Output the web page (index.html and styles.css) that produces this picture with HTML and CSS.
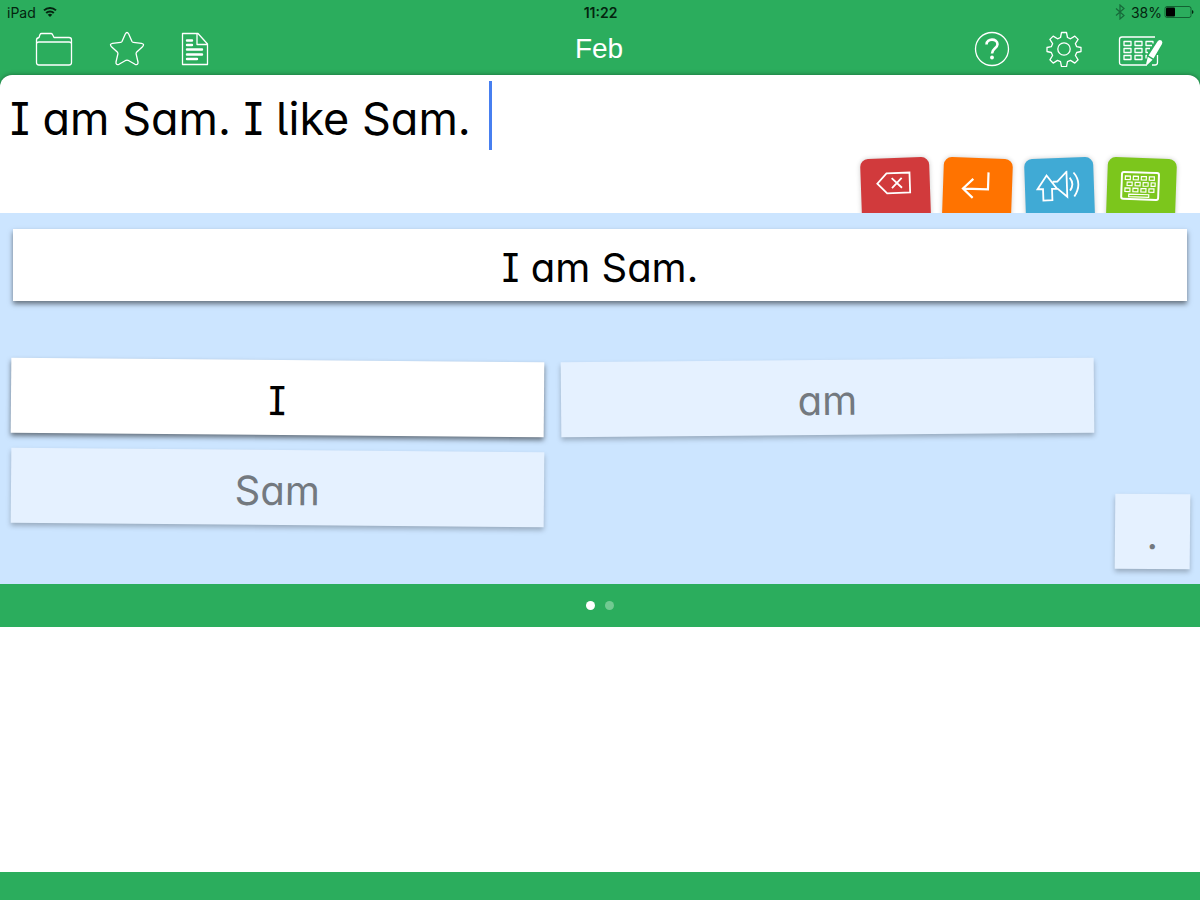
FILE: index.html
```html
<!DOCTYPE html>
<html lang="en">
<head>
    <meta charset="UTF-8">
    <meta name="viewport" content="width=device-width, initial-scale=1.0">
    <title>Feb</title>
    <link rel="stylesheet" href="styles.css">
</head>
<body>
    <header class="top">
        <div class="status-bar">
            <div class="status-left">
                <span>iPad</span>
                <svg width="14" height="12" viewBox="0 0 14 12" fill="none" stroke="#04240f" stroke-width="2">
                    <path d="M1 4.4a8.6 8.6 0 0 1 12 0M3.2 7a5.4 5.4 0 0 1 7.6 0"/>
                    <path d="M7 11L4.7 8.8a3.3 3.3 0 0 1 4.6 0z" fill="#04240f" stroke="none"/>
                </svg>
            </div>
            <time class="clock">11:22</time>
            <div class="status-right">
                <svg width="10" height="16" viewBox="0 0 10 16" fill="none" stroke="#17693a" stroke-width="1.2">
                    <path d="M1 4.5l8 7L5 15V1l4 3.5-8 7"/>
                </svg>
                <span>38%</span>
                <svg width="30" height="12" viewBox="0 0 30 12">
                    <rect x="1" y=".5" width="26" height="11" rx="2" fill="none" stroke="#126232"/>
                    <rect x="2" y="1.5" width="9" height="9" rx="1" fill="#000"/>
                    <path d="M28 4v4q1.5-.5 1.5-2t-1.5-2z" fill="#04240f"/>
                </svg>
            </div>
        </div>

        <nav class="toolbar">
            <div class="tools">
                <button class="tool" type="button" aria-label="Open">
                    <svg width="38" height="36" viewBox="0 0 38 36">
                        <path d="M1.5 9V31.5q0 2.500 2.500 2.500H34q2.500 0 2.500-2.500V9q0-2.500-2.500-2.500H19L17.5 3.500Q17 2.500 16 2.500H6.500Q5.500 2.500 5 3.500L4 6.500Q1.500 7 1.500 9zM1.500 13q0-2 2.500-2H34q2.500 0 2.500 2"/>
                    </svg>
                </button>
                <button class="tool" type="button" aria-label="Favourites">
                    <svg width="36" height="36" viewBox="0 0 36 36">
                        <path d="M16.3 3q1.700-3 3.400 0L23 10.500Q23.400 11.200 24.300 11.300L32.500 12.300Q36 13 33.500 15.700L27.500 21.300Q27 22 27.100 22.800L29 31Q29.300 34.500 26 33.300L19 29.300Q18 28.800 17 29.300L10 33.300Q6.700 34.500 7 31L8.900 22.800Q9 22 8.500 21.300L2.500 15.700Q0 13 3.500 12.300L11.700 11.300Q12.600 11.200 13 10.500z"/>
                    </svg>
                </button>
                <button class="tool" type="button" aria-label="Documents">
                    <svg width="28" height="36" viewBox="0 0 28 36">
                        <path d="M1.500 2.500H17L26.500 13V33.500h-25zM16 2.500V13.500H26.500"/>
                        <path d="M6 9.500h5M6 14h5M6 18.500h15M6 23.500h15M6 28h10" stroke-width="2.400" stroke-linecap="round"/>
                    </svg>
                </button>
            </div>
            <h1 class="title">Feb</h1>
            <div class="tools tools-right">
                <button class="tool" type="button" aria-label="Help">
                    <svg width="36" height="36" viewBox="0 0 36 36">
                        <circle cx="18" cy="18" r="16.5"/>
                        <path d="M12.500 13.500C12.500 7 23.500 7 23.500 13.300C23.500 17.300 18 17.500 18 22.500" stroke-width="2.600"/>
                        <circle cx="18" cy="26.5" r="1.9" fill="#fff" stroke="none"/>
                    </svg>
                </button>
                <button class="tool" type="button" aria-label="Settings">
                    <svg width="36" height="36" viewBox="0 0 36 36">
                        <circle cx="18" cy="18" r="6.2"/>
                        <path d="M15.500 1.500h5l1 5 3 1.300 4.300-2.700 3.300 3.300-2.700 4.300 1.300 3 4.300.8v4l-4.300 1-1.300 3 2.700 4.300-3.300 3.300-4.300-2.700-3 1.300-1 5h-5l-1-5-3-1.300-4.300 2.700-3.300-3.300 2.700-4.300-1.300-3-4.300-1v-4l4.300-.8 1.300-3-2.700-4.300 3.300-3.300 4.300 2.700 3-1.300z"/>
                    </svg>
                </button>
                <button class="tool" type="button" aria-label="Edit grid">
                    <svg width="45" height="36" viewBox="0 0 45 36">
                        <path d="M29 34H4q-2.500 0-2.500-2.500V8.500Q1.500 6 4 6H37M39.500 24V31.500Q39.500 34 37 34H34"/>
                        <path d="M6 10.500h7v4H6zM17 10.500h7v4h-7zM34 14.500h-6v-4h7v2M6 17.500h7v4H6zM17 17.500h7v4h-7zM30 21.500h-2v-4h4M6 24.500h7v4H6zM17 24.500h7v4h-7zM29 24.500h-1v3"/>
                        <path d="M39.500 10.500Q41 8 43.500 9.500Q45 11 44 13L35.500 27.500l-5-3zM29.800 25.800l4.800 3-5.200 5q-1.500.5-1.200-1.300z" fill="#fff" stroke="none"/>
                    </svg>
                </button>
            </div>
        </nav>
    </header>

    <main>
        <section class="editor">
            <div class="editor-line">
                <input class="editor-text" type="text" value="I am Sam. I like Sam." aria-label="Document text">
                <span class="cursor"></span>
            </div>
            <div class="tabs">
                <button class="tab tab-delete" type="button" aria-label="Delete">
                    <svg width="36" height="24" viewBox="0 0 36 24">
                        <path d="M11 2H34V22H11L1.500 12zM16 7l10 10M26 7L16 17"/>
                    </svg>
                </button>
                <button class="tab tab-return" type="button" aria-label="New line">
                    <svg width="32" height="28" viewBox="0 0 32 28">
                        <path d="M28 1V18H4M13 8L3 18l10 9" stroke-width="2.200"/>
                    </svg>
                </button>
                <button class="tab tab-speak" type="button" aria-label="Speak">
                    <svg width="44" height="32" viewBox="0 0 44 32">
                        <path d="M11 4L21 17.500H16V29H7V17.500H1.500zM17 10.500H21.500L31 1V26L21.500 17.500"/>
                        <path d="M34 7q5 6.500 0 13M38 2q9 11 0 24"/>
                    </svg>
                </button>
                <button class="tab tab-keyboard" type="button" aria-label="Keyboard">
                    <svg width="40" height="30" viewBox="0 0 40 30">
                        <rect x="1.5" y="1.5" width="37" height="27" rx="2" stroke-width="2"/>
                        <path stroke-width="1.2" d="M5 5.500h5v3.500H5zM13 5.500h5v3.500h-5zM21 5.500h5v3.500h-5zM29 5.500h5v3.500h-5zM7 11.500h5V15H7zM15 11.500h5V15h-5zM23 11.500h5V15h-5zM31 11.500h4V15h-4zM5 17.500h5V21H5zM13 17.500h5V21h-5zM21 17.500h5V21h-5zM29 17.500h5V21h-5zM9 23.500h20v2.500H9z"/>
                    </svg>
                </button>
            </div>
        </section>

        <section class="board">
            <button class="tile sentence" type="button">I am Sam.</button>
            <div class="board-body">
                <div class="words">
                    <button class="tile tilt-right" type="button">I</button>
                    <button class="tile tilt-left used" type="button">am</button>
                    <button class="tile tilt-right used" type="button">Sam</button>
                </div>
                <button class="tile punctuation used" type="button">.</button>
            </div>
        </section>

        <div class="pager">
            <button class="dot active" type="button" aria-label="Page 1"></button>
            <button class="dot" type="button" aria-label="Page 2"></button>
        </div>
    </main>

    <footer class="bottom-bar"></footer>
</body>
</html>
```
FILE: styles.css
```css
:root {
    --green: #2bad5d;
    --board: #cce5ff;
    --used: #e5f1ff;
    --cursor: #477ff0;
    --word-font: Inter, "Noto Sans", sans-serif;
}

* {
    box-sizing: border-box;
}

body {
    margin: 0;
    min-height: 100vh;
    display: flex;
    flex-direction: column;
    background: #fff;
    font-family: "Liberation Sans", Arial, sans-serif;
}

button {
    padding: 0;
    border: none;
    background: none;
    font: inherit;
    cursor: pointer;
}

svg {
    display: block;
}

main {
    flex: 1;
    background: linear-gradient(var(--green) 60px, #fff 60px);
}

/* Header */
.top {
    background: var(--green);
}

.status-bar {
    display: grid;
    grid-template-columns: 1fr auto 1fr;
    align-items: center;
    height: 24px;
    padding: 0 6px 0 7px;
    font-family: Inter, sans-serif;
    font-size: 14px;
    color: #04240f;
}

.status-left,
.status-right {
    display: flex;
    align-items: center;
    gap: 7px;
}

.status-right {
    justify-content: flex-end;
    gap: 2px;
}

.status-right span {
    margin-left: 4px;
}

.clock {
    font-weight: 600;
}

.toolbar {
    display: grid;
    grid-template-columns: 1fr auto 1fr;
    align-items: center;
    height: 51px;
    padding: 0 37px 2px 35px;
}

.tools {
    display: flex;
    gap: 36px;
}

.tools-right {
    justify-content: flex-end;
}

.tool svg {
    fill: none;
    stroke: #fff;
    stroke-width: 1.3;
    stroke-linejoin: round;
}

.title {
    margin: 0;
    font-size: 28px;
    font-weight: 400;
    color: #fff;
}

/* Writing area */
.editor {
    display: flex;
    flex-direction: column;
    justify-content: space-between;
    height: 138px;
    padding-top: 6px;
    overflow: hidden;
    background: #fff;
    border-radius: 12px 12px 0 0;
    box-shadow: 0 0 5px rgba(0, 0, 0, 0.4);
}

.editor-line {
    display: flex;
    align-items: center;
    gap: 18px;
    padding-left: 10px;
}

.editor-text {
    field-sizing: content;
    height: 69px;
    padding: 6px 0 0;
    border: none;
    outline: none;
    background: none;
    color: #000;
    font-family: var(--word-font);
    font-size: 45px;
    font-feature-settings: "cv05", "cv08", "cv11";
}

.cursor {
    width: 3px;
    height: 69px;
    background: var(--cursor);
}

.tabs {
    display: flex;
    justify-content: flex-end;
    gap: 13px;
    margin-bottom: -5px;
    padding-right: 24px;
}

.tab {
    display: flex;
    justify-content: center;
    align-items: flex-start;
    width: 69px;
    height: 60px;
    padding: 13px 4px 0 0;
    border-radius: 8px 8px 0 0;
    box-shadow: 0 0 5px rgba(0, 0, 0, 0.2);
}

.tab svg {
    fill: none;
    stroke: #fff;
    stroke-width: 1.8;
}

.tab-delete {
    background: #d13a3c;
    transform: rotate(-2deg);
}

.tab-return {
    background: #ff7300;
    transform: rotate(2deg);
}

.tab-speak {
    background: #40aad5;
    transform: rotate(-2deg);
}

.tab-keyboard {
    background: #7cc61c;
    transform: rotate(2deg);
}

/* Word grid */
.board {
    display: flex;
    flex-direction: column;
    gap: 59px;
    padding: 16px 10px 15px 11px;
    background: var(--board);
}

.tile {
    height: 75px;
    padding-top: 5px;
    background: #fff;
    color: #000;
    font-family: var(--word-font);
    font-size: 40px;
    font-feature-settings: "cv05", "cv08", "cv11";
    box-shadow: 0 3px 5px rgba(0, 0, 0, 0.5);
}

.sentence {
    height: 72px;
    margin: 0 3px 0 2px;
}

.used {
    background: var(--used);
    color: #73797f;
    box-shadow: 0 3px 5px rgba(0, 0, 0, 0.25);
}

.board-body {
    display: flex;
    gap: 22px;
    min-height: 209px;
}

.words {
    flex: 1;
    display: grid;
    grid-template-columns: 1fr 1fr;
    align-content: start;
    gap: 15px 17px;
}

.tilt-right {
    transform: rotate(0.5deg);
}

.tilt-left {
    transform: rotate(-0.5deg);
}

.punctuation {
    align-self: flex-end;
    width: 75px;
    transform: rotate(0.5deg);
}

/* Page dots */
.pager {
    display: flex;
    justify-content: center;
    align-items: center;
    gap: 10px;
    height: 43px;
    background: var(--green);
}

.dot {
    width: 9px;
    height: 9px;
    border-radius: 50%;
    background: #72ca92;
}

.dot.active {
    background: #fff;
}

.bottom-bar {
    height: 28px;
    background: var(--green);
}
```
